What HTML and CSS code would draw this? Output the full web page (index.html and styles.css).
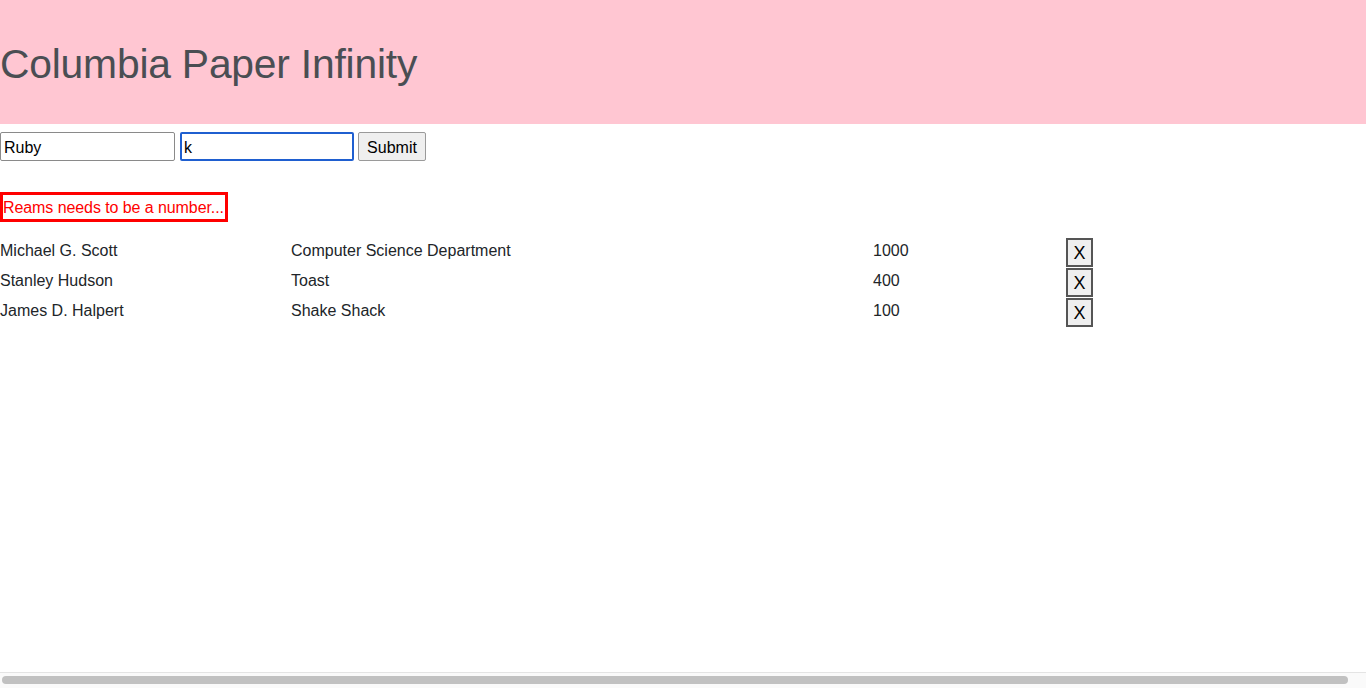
FILE: index.html
```html
<!DOCTYPE html>
<html>
<head>
<meta charset="utf-8">
<link rel="stylesheet" href="styles.css">
</head>
<body>
<header class="banner">
  <h1 class="title">Columbia Paper Infinity</h1>
</header>
<form class="entry">
  <input class="field" type="text" value="Ruby">
  <input class="field focused" type="text" value="k">
  <button class="submit" type="button">Submit</button>
</form>
<div class="error">Reams needs to be a number...</div>
<div class="rows">
  <div class="row"><span>Michael G. Scott</span><span>Computer Science Department</span><span>1000</span><span><button class="del" type="button">X</button></span></div>
  <div class="row"><span>Stanley Hudson</span><span>Toast</span><span>400</span><span><button class="del" type="button">X</button></span></div>
  <div class="row"><span>James D. Halpert</span><span>Shake Shack</span><span>100</span><span><button class="del" type="button">X</button></span></div>
</div>
<div class="hscroll"><div class="thumb"></div></div>
</body>
</html>
```
FILE: styles.css
```css
html, body { margin: 0; padding: 0; background: #fff; }
body {
  font-family: "Liberation Sans", Arial, sans-serif;
  font-size: 16px;
  color: #212529;
  overflow: hidden;
  height: 688px;
}
.banner {
  background: #ffc6d2;
  height: 124px;
  display: flex;
  align-items: center;
}
.title {
  margin: 0;
  padding-top: 4px;
  font-weight: 400;
  font-size: 40.8px;
  color: #4a4e53;
  letter-spacing: -0.2px;
}
.entry {
  display: flex;
  margin-top: 8px;
  height: 29px;
}
.field {
  box-sizing: border-box;
  width: 175px;
  height: 29px;
  border: 1px solid #8a8a8a;
  border-radius: 2px;
  padding: 2px 3px 0;
  font-family: "Liberation Sans", Arial, sans-serif;
  font-size: 16px;
  color: #000;
  outline: none;
}
.field.focused {
  width: 174px;
  margin-left: 5px;
  border: 2px solid #1f5fd0;
  padding: 2px 2px 0;
}
.submit {
  box-sizing: border-box;
  height: 29px;
  width: 68px;
  margin-left: 4px;
  border: 1px solid #9a9a9a;
  border-radius: 2px;
  background: #efefef;
  font-family: "Liberation Sans", Arial, sans-serif;
  font-size: 16px;
  color: #000;
  padding: 2px 0 0;
}
.error {
  display: inline-block;
  box-sizing: border-box;
  margin-top: 31px;
  height: 30px;
  width: 228px;
  border: 3px solid #ff0000;
  color: #ff0000;
  font-size: 16px;
  line-height: 26px;
  padding: 0;
  letter-spacing: -0.08px;
  white-space: nowrap;
  overflow: visible;
}
.rows {
  margin-top: 14px;
}
.row {
  display: grid;
  grid-template-columns: 291px 582px 193px 40px;
  height: 30px;
  line-height: 30px;
  font-size: 16px;
}
.row span { display: block; height: 30px; white-space: nowrap; }
.del {
  box-sizing: border-box;
  width: 27px;
  height: 29px;
  margin-top: 2px;
  border: 2px solid #555;
  background: #efefef;
  font-family: "Liberation Sans", Arial, sans-serif;
  font-size: 18px;
  color: #000;
  padding: 1px 0 0;
  line-height: 24px;
  vertical-align: top;
}
.hscroll {
  position: fixed;
  left: 0;
  right: 0;
  bottom: 0;
  height: 15px;
  background: #fafafa;
  border-top: 1px solid #e4e4e4;
}
.thumb {
  margin: 3px 18px 0 2px;
  height: 8px;
  border-radius: 4px;
  background: #c1c1c1;
}
```
